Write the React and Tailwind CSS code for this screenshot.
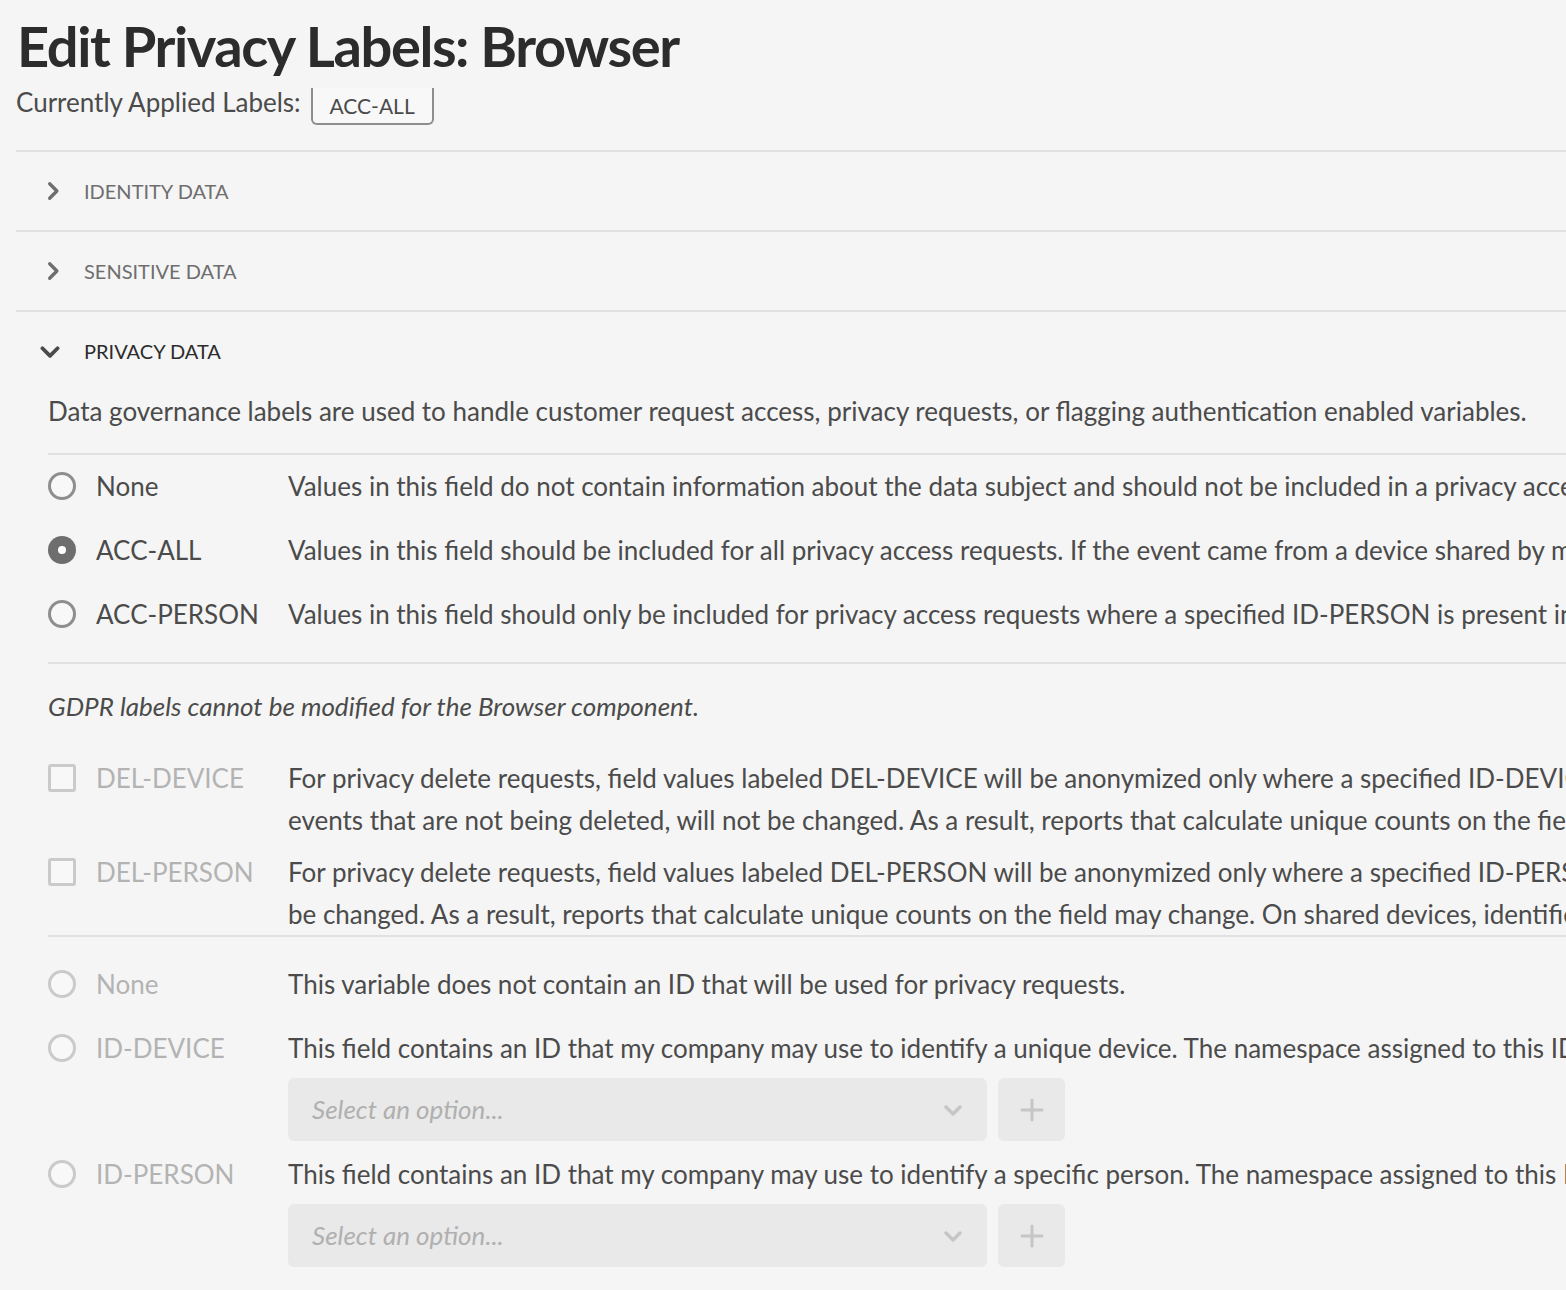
import React from 'react';

const font = { fontFamily: 'Lato, "Open Sans", sans-serif' };

const ChevronRight = ({ className }) => (
  <svg viewBox="0 0 12 18" className={className} fill="none" stroke="currentColor" strokeWidth="3" strokeLinecap="round" strokeLinejoin="round">
    <path d="M3 2.5l6.5 6.5-6.5 6.5" />
  </svg>
);

const ChevronDown = ({ className }) => (
  <svg viewBox="0 0 20 12" className={className} fill="none" stroke="currentColor" strokeWidth="3.5" strokeLinecap="round" strokeLinejoin="round">
    <path d="M3 3l7 7 7-7" />
  </svg>
);

const Radio = ({ checked, disabled }) => {
  if (checked) {
    return (
      <span className="w-7 h-7 rounded-full bg-[#6e6e6e] flex items-center justify-center shrink-0">
        <span className="w-2 h-2 rounded-full bg-white" />
      </span>
    );
  }
  return (
    <span
      className={
        disabled
          ? 'w-7 h-7 rounded-full border-[3px] border-[#cacaca] bg-[#f8f8f8] shrink-0'
          : 'w-7 h-7 rounded-full border-[3px] border-[#8e8e8e] bg-[#f8f8f8] shrink-0'
      }
    />
  );
};

const Checkbox = () => (
  <span className="w-7 h-7 rounded-[3px] border-[3px] border-[#cacaca] bg-[#f8f8f8] shrink-0" />
);

const AccordionHeader = ({ title, open }) => (
  <div className="h-20 flex items-center pb-[2px]">
    <div className="w-[68px] flex items-center pl-7">
      {open ? (
        <ChevronDown className="w-[22px] h-[13px] text-[#4b4b4b] -ml-[5px]" />
      ) : (
        <ChevronRight className="w-[14px] h-5 text-[#6e6e6e] ml-[2px]" />
      )}
    </div>
    <span className={open ? 'text-[20px] text-[#2c2c2c]' : 'text-[20px] text-[#6e6e6e]'}>{title}</span>
  </div>
);

const OptionRow = ({ control, label, labelMuted, lines, className }) => (
  <div className={'flex items-start ' + (className || '')}>
    <div className="w-[240px] flex items-center h-[42px] shrink-0">
      {control}
      <span className={labelMuted ? 'ml-5 text-[26px] text-[#b3b3b3]' : 'ml-5 text-[26px] text-[#4b4b4b]'}>{label}</span>
    </div>
    <div className="text-[26px] leading-[42px] text-[#4b4b4b] whitespace-nowrap">
      {lines.map((l, i) => (
        <div key={i}>{l}</div>
      ))}
    </div>
  </div>
);

const SelectRow = ({ className }) => (
  <div className={'flex gap-[11px] pl-[240px] ' + (className || '')}>
    <div className="w-[699px] h-[63px] rounded-md bg-[#e9e9e9] flex items-center justify-between pl-6 pr-6">
      <span className="italic text-[26px] text-[#b0b0b0]">Select an option...</span>
      <ChevronDown className="w-5 h-3 text-[#c6c6c6]" />
    </div>
    <div className="w-[67px] h-[63px] rounded-md bg-[#e9e9e9] flex items-center justify-center">
      <svg viewBox="0 0 24 24" className="w-6 h-6 text-[#c6c6c6]" fill="none" stroke="currentColor" strokeWidth="3" strokeLinecap="round">
        <path d="M12 2v20M2 12h20" />
      </svg>
    </div>
  </div>
);

export default function App() {
  return (
    <div className="min-h-screen bg-[#f5f5f5] overflow-hidden pl-4" style={font}>
      <h1 className="text-[56px] font-bold leading-[64px] text-[#2c2c2c] pt-[14px] pl-px tracking-tight">
        Edit Privacy Labels: Browser
      </h1>
      <div className="flex items-start mt-[10px]">
        <span className="text-[26px] leading-[28px] text-[#4b4b4b]">Currently Applied Labels:</span>
        <span className="ml-[10px] h-[37px] w-[123px] border-x-2 border-b-2 border-[#8e8e8e] rounded-b-md flex items-center justify-center text-[21px] text-[#4b4b4b] bg-[#f8f8f8]">
          ACC-ALL
        </span>
      </div>

      <div className="mt-[25px] border-t-2 border-[#e1e1e1]">
        <AccordionHeader title="IDENTITY DATA" />
      </div>
      <div className="border-t-2 border-[#e1e1e1] -mt-[2px]">
        <AccordionHeader title="SENSITIVE DATA" />
      </div>
      <div className="border-t-2 border-[#e1e1e1] -mt-[2px]">
        <AccordionHeader title="PRIVACY DATA" open />

        <div className="pl-8">
          <p className="-mt-[2px] text-[26px] leading-[42px] text-[#4b4b4b] whitespace-nowrap">
            Data governance labels are used to handle customer request access, privacy requests, or flagging authentication enabled variables.
          </p>

          <div className="mt-[21px] border-t-2 border-[#e1e1e1] pt-[10px] pb-[27px] flex flex-col gap-[22px]">
            <OptionRow
              control={<Radio />}
              label="None"
              lines={['Values in this field do not contain information about the data subject and should not be included in a privacy access request.']}
            />
            <OptionRow
              control={<Radio checked />}
              label="ACC-ALL"
              lines={['Values in this field should be included for all privacy access requests. If the event came from a device shared by multiple individuals, data will be included.']}
            />
            <OptionRow
              control={<Radio />}
              label="ACC-PERSON"
              lines={['Values in this field should only be included for privacy access requests where a specified ID-PERSON is present in the hit.']}
            />
          </div>

          <div className="border-t-2 border-[#e1e1e1] pt-[21px]">
            <p className="italic text-[26px] leading-[42px] text-[#4b4b4b]">GDPR labels cannot be modified for the Browser component.</p>
            <div className="mt-[30px] flex flex-col gap-[10px]">
              <OptionRow
                control={<Checkbox />}
                label="DEL-DEVICE"
                labelMuted
                lines={[
                  'For privacy delete requests, field values labeled DEL-DEVICE will be anonymized only where a specified ID-DEVICE is present in the hit. Values in other',
                  'events that are not being deleted, will not be changed. As a result, reports that calculate unique counts on the field may change.',
                ]}
              />
              <OptionRow
                control={<Checkbox />}
                label="DEL-PERSON"
                labelMuted
                lines={[
                  'For privacy delete requests, field values labeled DEL-PERSON will be anonymized only where a specified ID-PERSON is present in the hit. Other values will not',
                  'be changed. As a result, reports that calculate unique counts on the field may change. On shared devices, identifiers for other people may be removed.',
                ]}
              />
            </div>
          </div>

          <div className="border-t-2 border-[#e1e1e1] pt-[26px] pb-10">
            <OptionRow
              control={<Radio disabled />}
              label="None"
              labelMuted
              lines={['This variable does not contain an ID that will be used for privacy requests.']}
            />
            <OptionRow
              className="mt-[22px]"
              control={<Radio disabled />}
              label="ID-DEVICE"
              labelMuted
              lines={['This field contains an ID that my company may use to identify a unique device. The namespace assigned to this ID is required.']}
            />
            <SelectRow className="mt-[9px]" />
            <OptionRow
              className="mt-[12px]"
              control={<Radio disabled />}
              label="ID-PERSON"
              labelMuted
              lines={['This field contains an ID that my company may use to identify a specific person. The namespace assigned to this ID is required.']}
            />
            <SelectRow className="mt-[9px]" />
          </div>
        </div>
      </div>
    </div>
  );
}
